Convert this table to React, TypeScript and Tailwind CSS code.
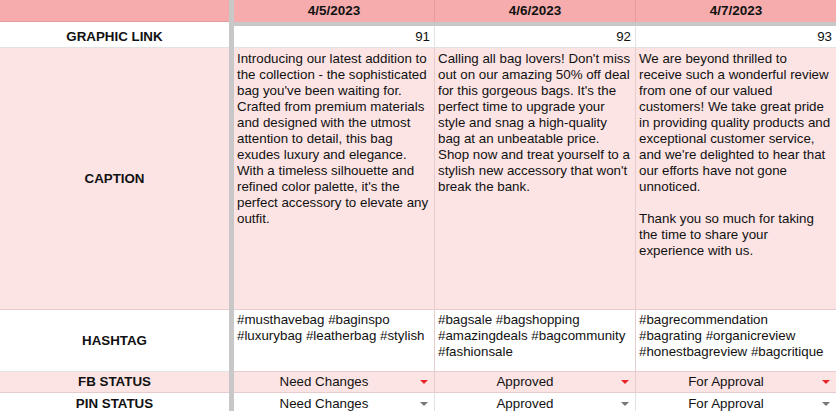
import React from "react";

const font = { fontFamily: '"Liberation Sans", Arial, sans-serif' };

const cap1 = [
  "Introducing our latest addition to",
  "the collection - the sophisticated",
  "bag you've been waiting for.",
  "Crafted from premium materials",
  "and designed with the utmost",
  "attention to detail, this bag",
  "exudes luxury and elegance.",
  "With a timeless silhouette and",
  "refined color palette, it's the",
  "perfect accessory to elevate any",
  "outfit.",
];
const cap2 = [
  "Calling all bag lovers! Don't miss",
  "out on our amazing 50% off deal",
  "for this gorgeous bags. It's the",
  "perfect time to upgrade your",
  "style and snag a high-quality",
  "bag at an unbeatable price.",
  "Shop now and treat yourself to a",
  "stylish new accessory that won't",
  "break the bank.",
];
const cap3 = [
  "We are beyond thrilled to",
  "receive such a wonderful review",
  "from one of our valued",
  "customers! We take great pride",
  "in providing quality products and",
  "exceptional customer service,",
  "and we're delighted to hear that",
  "our efforts have not gone",
  "unnoticed.",
  "",
  "Thank you so much for taking",
  "the time to share your",
  "experience with us.",
];
const tags = [
  ["#musthavebag #baginspo", "#luxurybag #leatherbag #stylish"],
  ["#bagsale #bagshopping", "#amazingdeals #bagcommunity", "#fashionsale"],
  ["#bagrecommendation", "#bagrating #organicreview", "#honestbagreview #bagcritique"],
];

const colStart = ["col-start-3", "col-start-4", "col-start-5"];
const statuses = ["Need Changes", "Approved", "For Approval"];

function Lines({ lines }: { lines: string[] }) {
  return (
    <>
      {lines.map((l, i) => (
        <div key={i} className="whitespace-nowrap h-[16px] leading-[16px]">
          {l}
        </div>
      ))}
    </>
  );
}

function Label({ text, cls }: { text: string; cls: string }) {
  return (
    <div className={`flex items-center justify-center font-bold text-[13.33px] text-[#111] ${cls}`}>
      {text}
    </div>
  );
}

function Status({ text, red, cls }: { text: string; red: boolean; cls: string }) {
  return (
    <div className={`relative flex items-center justify-center pr-[20px] text-[13.33px] text-[#111] ${cls}`}>
      {text}
      <div
        className={`absolute right-[6px] top-1/2 -translate-y-1/2 w-0 h-0 border-l-[4px] border-r-[4px] border-t-[4px] border-l-transparent border-r-transparent ${
          red ? "border-t-[#e8262a]" : "border-t-[#777777]"
        }`}
      />
    </div>
  );
}

export default function App() {
  const pinkB = "border-[#e6cccc]";
  const whiteB = "border-[#e2e2e2]";
  return (
    <div className="w-[836px] h-[411px] overflow-hidden bg-white" style={font}>
      <div className="grid grid-cols-[229px_5px_201px_201px_200px] grid-rows-[22px_4px_22px_262px_62px_21px_21px]">
        {/* gray frozen column bar */}
        <div className="col-start-2 row-start-1 row-end-8 bg-[#c8c8c8]" />

        {/* header */}
        <div className="col-start-1 row-start-1 bg-[#f6acac] border-b border-[#e59b9b]" />
        {["4/5/2023", "4/6/2023", "4/7/2023"].map((d, i) => (
          <div
            key={d}
            className={`row-start-1 ${colStart[i]} bg-[#f6acac] flex items-center justify-center font-bold text-[13.5px] text-[#111] ${
              i < 2 ? "border-r border-[#e59b9b]" : ""
            }`}
          >
            {d}
          </div>
        ))}

        {/* gray band under header for data columns */}
        <div className="row-start-2 col-start-3 col-end-6 bg-[#c8c8c8]" />

        {/* graphic link row */}
        <Label text="GRAPHIC LINK" cls={`row-start-2 row-end-4 col-start-1 bg-white border-b ${whiteB} pt-[4px]`} />
        {["91", "92", "93"].map((n, i) => (
          <div
            key={n}
            className={`row-start-3 ${colStart[i]} bg-white border-b ${whiteB} ${i < 2 ? "border-r" : ""} flex items-center justify-end pr-[4px] text-[13.33px] text-[#111]`}
          >
            {n}
          </div>
        ))}

        {/* caption row */}
        <Label text="CAPTION" cls={`row-start-4 col-start-1 bg-[#fce4e4] border-b ${pinkB}`} />
        {[cap1, cap2, cap3].map((c, i) => (
          <div
            key={i}
            className={`row-start-4 ${colStart[i]} bg-[#fce4e4] border-b ${pinkB} ${i < 2 ? "border-r" : ""} pl-[3px] pt-[3px] text-[13.33px] text-[#111] overflow-hidden`}
          >
            <Lines lines={c} />
          </div>
        ))}

        {/* hashtag row */}
        <Label text="HASHTAG" cls={`row-start-5 col-start-1 bg-white border-b ${whiteB}`} />
        {tags.map((t, i) => (
          <div
            key={i}
            className={`row-start-5 ${colStart[i]} bg-white border-b ${pinkB} ${i < 2 ? "border-r" : ""} pl-[3px] pt-[2px] text-[13.33px] text-[#111] overflow-hidden`}
          >
            <Lines lines={t} />
          </div>
        ))}

        {/* FB status row */}
        <Label text="FB STATUS" cls={`row-start-6 col-start-1 bg-[#fce4e4] border-b ${pinkB}`} />
        {statuses.map((s, i) => (
          <Status
            key={"fb" + s}
            text={s}
            red
            cls={`row-start-6 ${colStart[i]} bg-[#fce4e4] border-b ${pinkB} ${i < 2 ? "border-r" : ""}`}
          />
        ))}

        {/* PIN status row */}
        <Label text="PIN STATUS" cls="row-start-7 col-start-1 bg-white" />
        {statuses.map((s, i) => (
          <Status
            key={"pin" + s}
            text={s}
            red={false}
            cls={`row-start-7 ${colStart[i]} bg-white ${whiteB} ${i < 2 ? "border-r" : ""}`}
          />
        ))}
      </div>
    </div>
  );
}
